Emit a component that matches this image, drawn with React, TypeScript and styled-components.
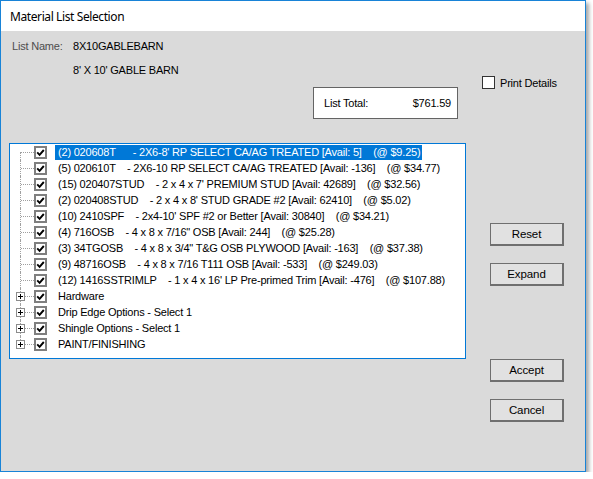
import React from "react";
import styled, { createGlobalStyle } from "styled-components";

const Global = createGlobalStyle`
  html, body { margin: 0; padding: 0; background: #ffffff; }
  body { font-family: "Liberation Sans", Arial, sans-serif; }
  * { box-sizing: border-box; }
`;

const Window = styled.div`
  width: 586px;
  height: 472px;
  border: 1px solid #1883d7;
  background: #dadada;
  box-shadow: 3px 3px 4px rgba(0, 0, 0, 0.35);
  display: flex;
  flex-direction: column;
  letter-spacing: -0.2px;
`;

const TitleBar = styled.div`
  height: 30px;
  background: #ffffff;
  display: flex;
  align-items: center;
  padding-left: 9px;
  padding-top: 1px;
  font-family: "Noto Sans", "Open Sans", sans-serif;
  font-size: 12px;
  letter-spacing: -0.4px;
  color: #000000;
`;

const Body = styled.div`
  flex: 1;
  display: flex;
  gap: 16px;
  padding-left: 8px;
`;

const MainColumn = styled.div`
  width: 457px;
  display: flex;
  flex-direction: column;
  padding-top: 7px;
`;

const InfoLine = styled.div`
  display: flex;
  height: 16px;
  align-items: center;
  font-size: 11px;
  color: #000;
  padding-left: 3px;
  & + & { margin-top: 8px; }
`;

const InfoLabel = styled.span`
  width: 61px;
  color: #4d4d4d;
`;

const InfoValue = styled.span`
  color: #000;
`;

const TotalBox = styled.div`
  align-self: flex-end;
  margin-right: 8px;
  margin-top: 9px;
  width: 145px;
  height: 32px;
  border: 1px solid #646464;
  background: #ffffff;
  display: flex;
  align-items: center;
  justify-content: space-between;
  padding: 0 6px 0 10px;
  font-size: 11px;
  color: #000;
`;

const Tree = styled.div`
  margin-top: 24px;
  height: 216px;
  border: 1px solid #0078d7;
  background: #ffffff;
  display: flex;
  flex-direction: column;
`;

const Row = styled.div`
  display: flex;
  align-items: center;
  height: 16px;
  font-size: 11px;
`;

const Gutter = styled.div<{ $first?: boolean; $last?: boolean; $expander?: boolean }>`
  position: relative;
  width: 24px;
  height: 16px;
  flex: none;
  &::before {
    content: "";
    position: absolute;
    left: 10px;
    top: ${(p) => (p.$first ? "8px" : "0")};
    height: ${(p) => (p.$last || p.$first ? "8px" : "16px")};
    border-left: 1px dotted #a0a0a0;
  }
  &::after {
    content: "";
    position: absolute;
    left: ${(p) => (p.$expander ? "15px" : "11px")};
    right: 0;
    top: 8px;
    border-top: 1px dotted #a0a0a0;
  }
`;

const Expander = styled.div`
  position: absolute;
  left: 6px;
  top: 4px;
  width: 9px;
  height: 9px;
  border: 1px solid #8c8c8c;
  background: #ffffff;
  z-index: 1;
  &::before {
    content: "";
    position: absolute;
    left: 1px;
    top: 3px;
    width: 5px;
    height: 1px;
    background: #000;
  }
  &::after {
    content: "";
    position: absolute;
    left: 3px;
    top: 1px;
    width: 1px;
    height: 5px;
    background: #000;
  }
`;

const TreeCheck = styled.div`
  width: 13px;
  height: 13px;
  flex: none;
  border: 2px solid #7f7f7f;
  background: #ffffff;
  display: flex;
  align-items: center;
  justify-content: center;
`;

const Label = styled.span<{ $selected?: boolean }>`
  margin-left: 8px;
  padding: 0 2px 0 3px;
  height: 15px;
  line-height: 15px;
  white-space: pre;
  color: ${(p) => (p.$selected ? "#ffffff" : "#000000")};
  background: ${(p) => (p.$selected ? "#0078d7" : "transparent")};
`;

const SideColumn = styled.div`
  flex: 1;
  display: flex;
  flex-direction: column;
  padding-top: 45px;
`;

const PrintRow = styled.label`
  display: flex;
  align-items: center;
  gap: 5px;
  height: 13px;
  font-size: 11px;
  color: #000;
`;

const PlainCheck = styled.span`
  width: 13px;
  height: 13px;
  border: 1px solid #333333;
  background: #ffffff;
`;

const Button = styled.button<{ $gap: number }>`
  margin-left: 8px;
  margin-top: ${(p) => p.$gap}px;
  width: 74px;
  height: 23px;
  border: 1px solid #6f6f6f;
  border-right-width: 2px;
  border-bottom-width: 2px;
  background: #e1e1e1;
  font-family: "Liberation Sans", Arial, sans-serif;
  font-size: 11.5px;
  letter-spacing: -0.1px;
  color: #000;
  padding: 0;
`;

const Check = () => (
  <svg width="9" height="9" viewBox="0 0 9 9">
    <path d="M1.2 4.4 L3.6 6.8 L7.8 2" fill="none" stroke="#000" strokeWidth="1.9" />
  </svg>
);

type Item = { text: string; expander?: boolean };

const items: Item[] = [
  { text: "(2) 020608T      - 2X6-8' RP SELECT CA/AG TREATED [Avail: 5]    (@ $9.25)" },
  { text: "(5) 020610T    - 2X6-10 RP SELECT CA/AG TREATED [Avail: -136]    (@ $34.77)" },
  { text: "(15) 020407STUD    - 2 x 4 x 7' PREMIUM STUD [Avail: 42689]    (@ $32.56)" },
  { text: "(2) 020408STUD    - 2 x 4 x 8' STUD GRADE #2 [Avail: 62410]    (@ $5.02)" },
  { text: "(10) 2410SPF    - 2x4-10' SPF #2 or Better [Avail: 30840]    (@ $34.21)" },
  { text: "(4) 716OSB    - 4 x 8 x 7/16\" OSB [Avail: 244]    (@ $25.28)" },
  { text: "(3) 34TGOSB    - 4 x 8 x 3/4\" T&G OSB PLYWOOD [Avail: -163]    (@ $37.38)" },
  { text: "(9) 48716OSB    - 4 x 8 x 7/16 T111 OSB [Avail: -533]    (@ $249.03)" },
  { text: "(12) 1416SSTRIMLP    - 1 x 4 x 16' LP Pre-primed Trim [Avail: -476]    (@ $107.88)" },
  { text: "Hardware", expander: true },
  { text: "Drip Edge Options - Select 1", expander: true },
  { text: "Shingle Options - Select 1", expander: true },
  { text: "PAINT/FINISHING", expander: true },
];

export default function App() {
  return (
    <>
      <Global />
      <Window>
        <TitleBar>Material List Selection</TitleBar>
        <Body>
          <MainColumn>
            <InfoLine>
              <InfoLabel>List Name:</InfoLabel>
              <InfoValue>8X10GABLEBARN</InfoValue>
            </InfoLine>
            <InfoLine>
              <InfoLabel />
              <InfoValue>8' X 10' GABLE BARN</InfoValue>
            </InfoLine>
            <TotalBox>
              <span>List Total:</span>
              <span>$761.59</span>
            </TotalBox>
            <Tree>
              {items.map((it, i) => (
                <Row key={i}>
                  <Gutter $first={i === 0} $last={i === items.length - 1} $expander={it.expander}>
                    {it.expander && <Expander />}
                  </Gutter>
                  <TreeCheck>
                    <Check />
                  </TreeCheck>
                  <Label $selected={i === 0}>{it.text}</Label>
                </Row>
              ))}
            </Tree>
          </MainColumn>
          <SideColumn>
            <PrintRow>
              <PlainCheck />
              Print Details
            </PrintRow>
            <Button $gap={134}>Reset</Button>
            <Button $gap={17}>Expand</Button>
            <Button $gap={73}>Accept</Button>
            <Button $gap={17}>Cancel</Button>
          </SideColumn>
        </Body>
      </Window>
    </>
  );
}
